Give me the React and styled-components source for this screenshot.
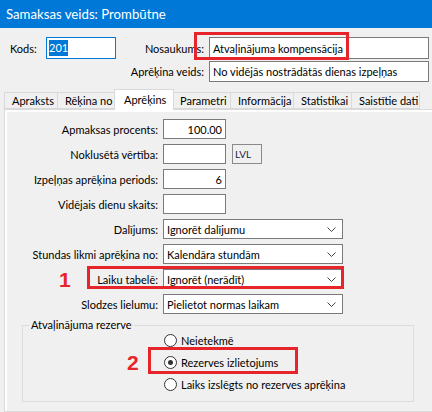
import React from 'react';
import styled, { createGlobalStyle } from 'styled-components';

const GlobalStyle = createGlobalStyle`
  body {
    margin: 0;
    background: #f0f0f0;
    font-family: Lato, "Liberation Sans", sans-serif;
    font-size: 11px;
    color: #000;
    overflow: hidden;
  }
`;

const tabs = [
  { name: 'Apraksts', width: 54 },
  { name: 'Rēķina no', width: 59 },
  { name: 'Aprēķins', width: 60, active: true },
  { name: 'Parametri', width: 59 },
  { name: 'Informācija', width: 64 },
  { name: 'Statistikai', width: 59 },
  { name: 'Saistītie dati', width: 69 },
];

const selects = [
  { label: 'Dalījums:', value: 'Ignorēt dalījumu' },
  { label: 'Stundas likmi aprēķina no:', value: 'Kalendāra stundām' },
  { label: 'Laiku tabelē:', value: 'Ignorēt (nerādīt)', mark: '1' },
  { label: 'Slodzes lielumu:', value: 'Pielietot normas laikam' },
];

const radios = [
  { label: 'Neietekmē' },
  { label: 'Rezerves izlietojums', checked: true, mark: '2' },
  { label: 'Laiks izslēgts no rezerves aprēķina' },
];

function Chevron() {
  return (
    <svg width="9" height="5" viewBox="0 0 9 5">
      <polyline points="0.5,0.5 4.5,4.5 8.5,0.5" fill="none" stroke="#444" strokeWidth="1" />
    </svg>
  );
}

function App() {
  return (
    <Window>
      <GlobalStyle />
      <TitleBar>Samaksas veids: Prombūtne</TitleBar>
      <Header>
        <HeadLabel>Kods:</HeadLabel>
        <CodeBox>
          <Selected>201</Selected>
        </CodeBox>
        <FieldLabel>Nosaukums:</FieldLabel>
        <TextBox>Atvaļinājuma kompensācija</TextBox>
        <span />
        <span />
        <FieldLabel>Aprēķina veids:</FieldLabel>
        <TextBox>No vidējās nostrādātās dienas izpeļņas</TextBox>
        <NameMark />
      </Header>
      <TabStrip>
        {tabs.map((t) => (
          <Tab key={t.name} active={t.active} width={t.width}>
            {t.name}
          </Tab>
        ))}
      </TabStrip>
      <Panel>
        <Page>
          <FormRow>
            <RowLabel>Apmaksas procents:</RowLabel>
            <NumBox>100.00</NumBox>
          </FormRow>
          <FormRow>
            <RowLabel>Noklusētā vērtība:</RowLabel>
            <NumBox />
            <Unit>LVL</Unit>
          </FormRow>
          <FormRow>
            <RowLabel>Izpeļņas aprēķina periods:</RowLabel>
            <NumBox>6</NumBox>
          </FormRow>
          <FormRow>
            <RowLabel>Vidējais dienu skaits:</RowLabel>
            <NumBox />
          </FormRow>
          {selects.map((s) => (
            <FormRow key={s.label}>
              <RowLabel>{s.label}</RowLabel>
              <Select>
                <span>{s.value}</span>
                <Chevron />
              </Select>
              {s.mark && (
                <>
                  <RowMark />
                  <MarkNumber side="row">{s.mark}</MarkNumber>
                </>
              )}
            </FormRow>
          ))}
          <Group>
            <Legend>Atvaļinājuma rezerve</Legend>
            <RadioList>
              {radios.map((r) => (
                <RadioRow key={r.label}>
                  <RadioCircle checked={r.checked} />
                  <span>{r.label}</span>
                  {r.mark && (
                    <>
                      <RadioMark />
                      <MarkNumber side="radio">{r.mark}</MarkNumber>
                    </>
                  )}
                </RadioRow>
              ))}
            </RadioList>
          </Group>
        </Page>
      </Panel>
    </Window>
  );
}

export default App;

const Window = styled.div`
  width: 432px;
  height: 412px;
  display: flex;
  flex-direction: column;
  overflow: hidden;
  background: #f0f0f0;
`;

const TitleBar = styled.div`
  height: 28px;
  flex-shrink: 0;
  display: flex;
  align-items: center;
  padding-left: 6px;
  background: #0078d7;
  color: #fff;
  font-size: 13.2px;
`;

const Header = styled.div`
  position: relative;
  display: grid;
  grid-template-columns: 36px 70px 1fr 220px;
  grid-template-rows: 22px 21px;
  row-gap: 2px;
  align-items: center;
  padding: 9px 3px 7px 10px;
`;

const HeadLabel = styled.span`
  white-space: nowrap;
`;

const FieldLabel = styled.span`
  text-align: right;
  padding-right: 5px;
  white-space: nowrap;
`;

const TextBox = styled.div`
  height: 100%;
  box-sizing: border-box;
  border: 1px solid #7a7a7a;
  background: #fff;
  padding: 0 3px;
  display: flex;
  align-items: center;
  white-space: nowrap;
  overflow: hidden;
`;

const CodeBox = styled(TextBox)`
  border-color: #0078d7;
  padding-left: 2px;
`;

const Selected = styled.span`
  background: #0078d7;
  color: #fff;
  line-height: 16px;
`;

const NameMark = styled.div`
  position: absolute;
  left: 194px;
  top: 4px;
  width: 155px;
  height: 28px;
  box-sizing: border-box;
  border: 3px solid #e8242b;
  pointer-events: none;
`;

const TabStrip = styled.div`
  display: flex;
  align-items: flex-end;
  height: 20px;
  padding-left: 4px;
  flex-shrink: 0;
`;

const Tab = styled.div`
  position: relative;
  z-index: ${(p) => (p.active ? 1 : 0)};
  box-sizing: border-box;
  flex-shrink: 0;
  width: ${(p) => p.width}px;
  height: ${(p) => (p.active ? '21px' : '17px')};
  margin: ${(p) => (p.active ? '0 -1px -1px -2px' : '0 0 0 -1px')};
  padding: ${(p) => (p.active ? '0 0 2px 9px' : '0 0 0 7px')};
  display: flex;
  align-items: center;
  background: ${(p) => (p.active ? '#fff' : '#f0f0f0')};
  border: 1px solid #d9d9d9;
  border-bottom: ${(p) => (p.active ? 'none' : '1px solid #d9d9d9')};
  white-space: nowrap;
  overflow: hidden;

  &:first-child {
    margin-left: 0;
  }
`;

const Panel = styled.div`
  flex: 1;
  margin-left: 4px;
  margin-right: -4px;
  border: 1px solid #d9d9d9;
  background: #fff;
  padding: 2px 2px 0 2px;
  display: flex;
`;

const Page = styled.div`
  flex: 1;
  background: #f0f0f0;
  padding-top: 7px;
  display: flex;
  flex-direction: column;
  gap: 5px;
`;

const FormRow = styled.div`
  position: relative;
  display: flex;
  align-items: center;
  gap: 5px;
  height: 20px;
`;

const RowLabel = styled.span`
  width: 151px;
  flex-shrink: 0;
  text-align: right;
  white-space: nowrap;
`;

const NumBox = styled(TextBox)`
  width: 63px;
  justify-content: flex-end;
`;

const Unit = styled.div`
  width: 30px;
  height: 100%;
  box-sizing: border-box;
  margin-left: 1px;
  border: 1px solid #8a8a8a;
  background: #f0f0f0;
  padding-left: 2px;
  display: flex;
  align-items: center;
  font-size: 10px;
  color: #1a1a40;
`;

const Select = styled(TextBox)`
  width: 180px;
  justify-content: space-between;
  padding-right: 6px;
`;

const RowMark = styled.div`
  position: absolute;
  left: 80px;
  top: -3px;
  width: 257px;
  height: 23px;
  box-sizing: border-box;
  border: 3px solid #e8242b;
  pointer-events: none;
`;

const MarkNumber = styled.span`
  position: absolute;
  left: ${(p) => (p.side === 'row' ? '52px' : '-37px')};
  top: 50%;
  transform: translateY(-50%);
  font-family: "Liberation Sans", "Noto Sans", sans-serif;
  font-size: 21px;
  font-weight: 700;
  color: #e8242b;
  line-height: 1;
`;

const Group = styled.fieldset`
  margin: 0 0 0 15px;
  width: 392px;
  box-sizing: border-box;
  border: 1px solid #dcdcdc;
  padding: 0 0 9px 0;
  min-width: 0;
`;

const Legend = styled.legend`
  margin-left: 6px;
  padding: 0 2px;
  line-height: 12px;
`;

const RadioList = styled.div`
  display: flex;
  flex-direction: column;
  gap: 6px;
  padding-left: 141px;
  padding-top: 1px;
`;

const RadioRow = styled.div`
  position: relative;
  display: flex;
  align-items: center;
  gap: 4px;
  height: 16px;
  white-space: nowrap;
`;

const RadioCircle = styled.span`
  width: 13px;
  height: 13px;
  box-sizing: border-box;
  border-radius: 50%;
  border: 1px solid #333;
  background: #fff;
  display: flex;
  align-items: center;
  justify-content: center;

  &::after {
    content: '';
    display: ${(p) => (p.checked ? 'block' : 'none')};
    width: 5px;
    height: 5px;
    border-radius: 50%;
    background: #333;
  }
`;

const RadioMark = styled.div`
  position: absolute;
  left: -16px;
  top: -7px;
  width: 150px;
  height: 27px;
  box-sizing: border-box;
  border: 3px solid #e8242b;
  pointer-events: none;
`;
